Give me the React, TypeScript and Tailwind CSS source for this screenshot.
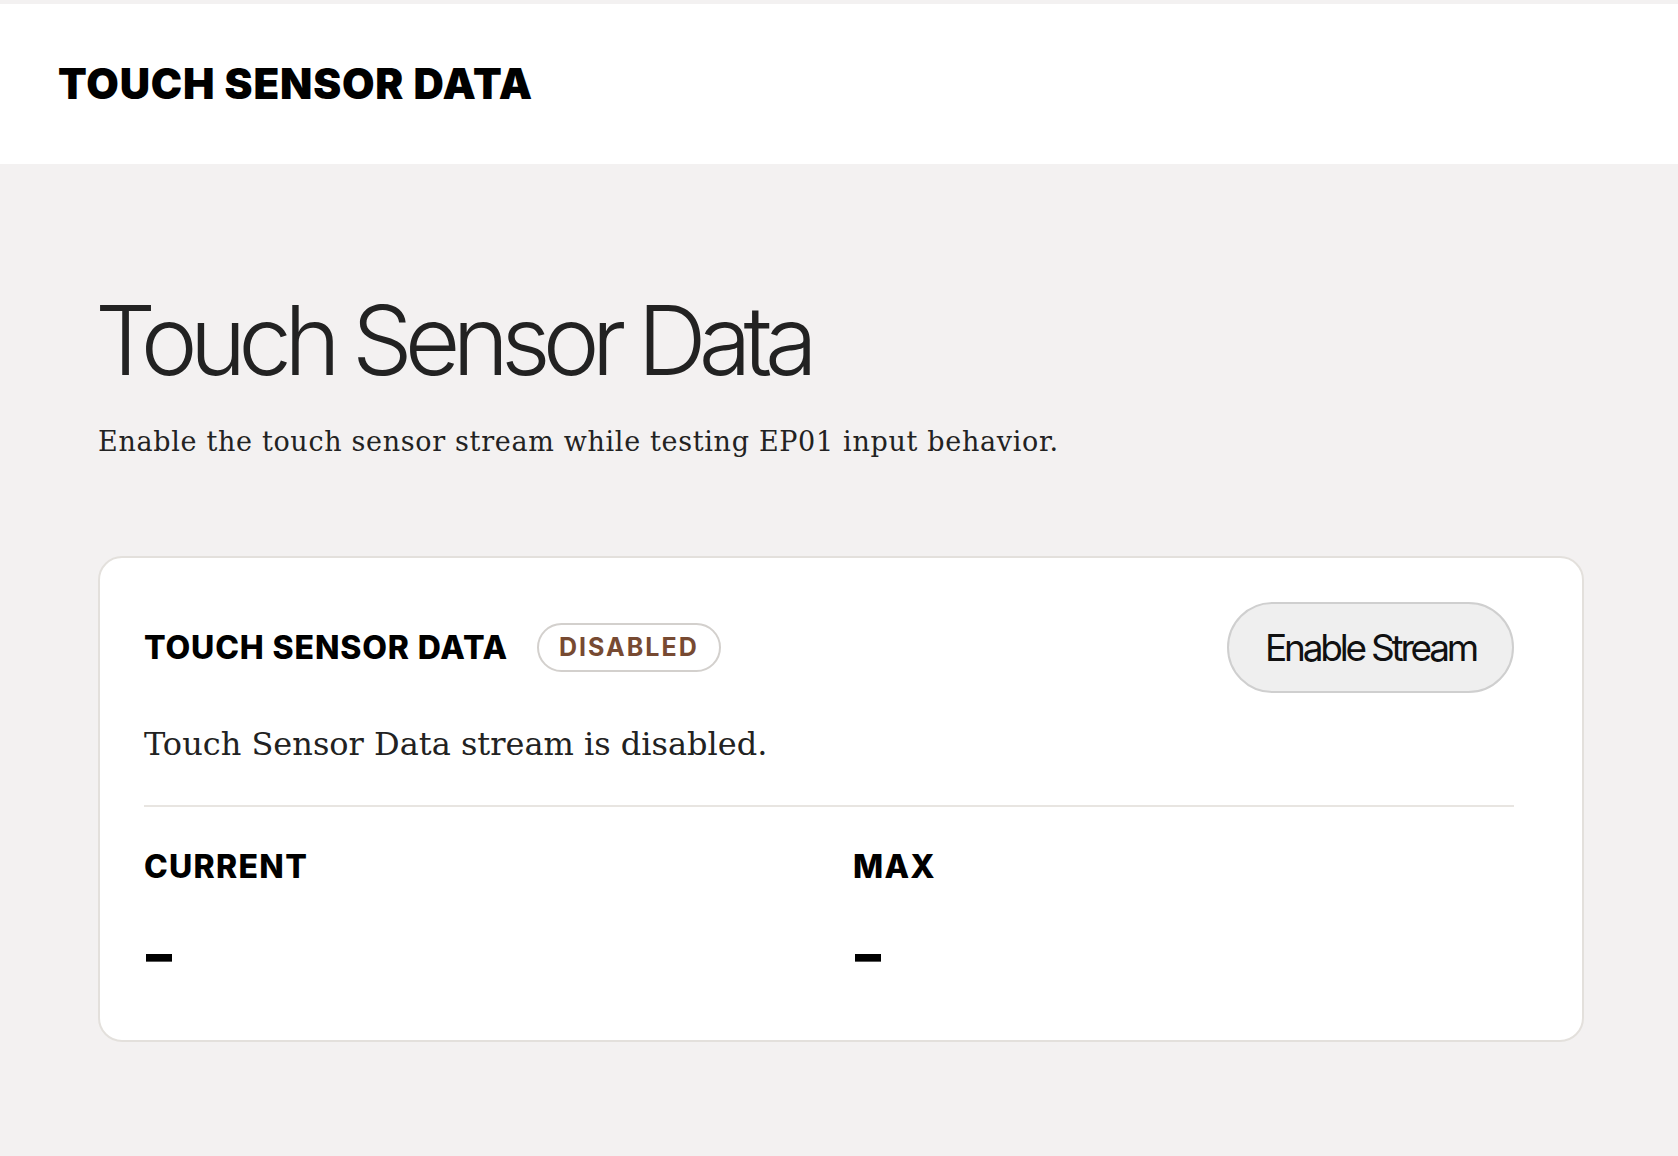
import React from "react";

const sans = "font-['Inter','Liberation_Sans',sans-serif]";
const serif = "font-['DejaVu_Serif','Liberation_Serif',serif]";

function Metric({ label }: { label: string }) {
  return (
    <div>
      <div className={`${sans} text-[32px] leading-[40px] font-extrabold tracking-[0.04em] text-black`}>
        {label}
      </div>
      <div className={`${sans} mt-[44px] ml-[2px] text-[52px] leading-[48px] font-black text-black`}>–</div>
    </div>
  );
}

export default function App() {
  return (
    <div className="min-h-screen bg-[#f3f1f1] pt-1">
      <header className="flex h-[160px] items-center bg-white px-[58px]">
        <h1 className={`${sans} text-[42px] leading-none font-black tracking-[0.02em] text-black`}>
          TOUCH SENSOR DATA
        </h1>
      </header>

      <main className="pt-[128px] pr-[94px] pb-[96px] pl-[98px]">
        <h2 className={`${sans} -ml-[3px] text-[96px] leading-none font-light tracking-[-0.082em] text-[#222]`}>
          Touch Sensor Data
        </h2>
        <p className={`${serif} mt-9 text-[27px] leading-[36px] tracking-[0.025em] text-[#222]`}>
          Enable the touch sensor stream while testing EP01 input behavior.
        </p>

        <section className="mt-24 rounded-[24px] border-2 border-[#e3e0dc] bg-white pt-[44px] pr-[68px] pb-[61px] pl-[44px]">
          <div className="flex items-center justify-between">
            <div className="flex items-center gap-[29px]">
              <h3 className={`${sans} text-[32px] leading-[40px] font-extrabold tracking-[0.027em] text-black`}>
                TOUCH SENSOR DATA
              </h3>
              <span
                className={`${sans} flex h-[49px] items-center rounded-full border-2 border-[#d3d0cd] px-5 text-[25px] font-bold tracking-[0.08em] text-[#774a32]`}
              >
                DISABLED
              </span>
            </div>
            <button
              className={`${sans} h-[91px] rounded-full border-2 border-[#cfcfcf] bg-[#efefef] px-9 text-[37px] font-normal tracking-[-0.087em] text-[#111]`}
            >
              Enable Stream
            </button>
          </div>

          <p className={`${serif} mt-[31px] text-[32px] leading-[40px] text-[#222]`}>
            Touch Sensor Data stream is disabled.
          </p>

          <div className="mt-[41px] h-[2px] bg-[#e8e5e1]" />

          <div className="mt-[40px] grid grid-cols-2 gap-12">
            <Metric label="CURRENT" />
            <Metric label="MAX" />
          </div>
        </section>
      </main>
    </div>
  );
}
